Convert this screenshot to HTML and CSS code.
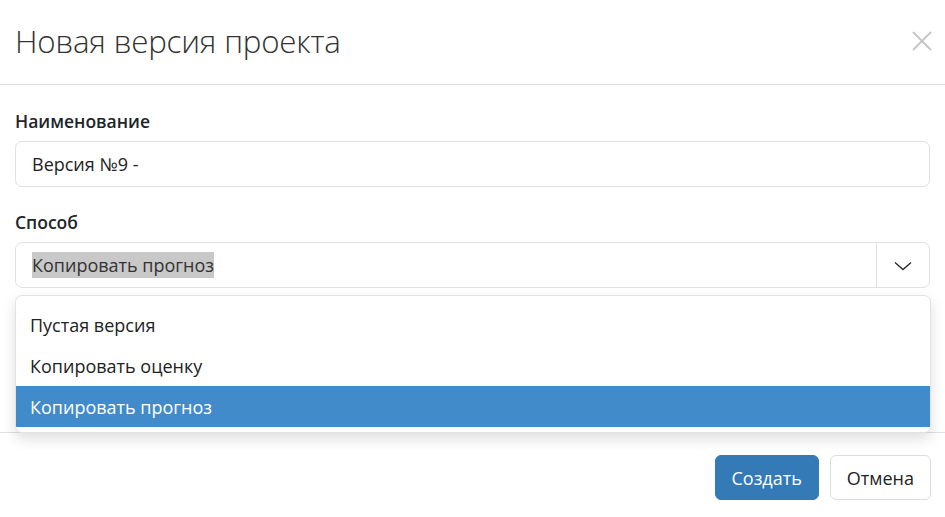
FILE: index.html
```html
<!DOCTYPE html>
<html lang="ru">
<head>
<meta charset="utf-8">
<title>Новая версия проекта</title>
<link rel="stylesheet" href="styles.css">
</head>
<body>
<div class="modal">
  <div class="modal-header">
    <h4 class="modal-title">Новая версия проекта</h4>
    <button class="close" aria-label="Закрыть">
      <svg width="20" height="20" viewBox="0 0 20 20"><path d="M1 1 L19 19 M19 1 L1 19" stroke="#c6c6c6" stroke-width="2" fill="none"/></svg>
    </button>
  </div>
  <div class="modal-body">
    <div class="form-group">
      <label class="form-label">Наименование</label>
      <div class="form-control">Версия №9 -</div>
    </div>
    <div class="form-group select-group">
      <label class="form-label">Способ</label>
      <div class="select">
        <div class="select-value"><span class="hl">Копировать прогноз</span></div>
        <div class="select-arrow">
          <svg width="18" height="10" viewBox="0 0 18 10"><path d="M1 1.5 L9 8.5 L17 1.5" stroke="#2b2b2b" stroke-width="1.4" fill="none"/></svg>
        </div>
      </div>
      <ul class="dropdown">
        <li class="item">Пустая версия</li>
        <li class="item">Копировать оценку</li>
        <li class="item active">Копировать прогноз</li>
      </ul>
    </div>
  </div>
  <div class="modal-footer">
    <button class="btn btn-primary">Создать</button>
    <button class="btn btn-default">Отмена</button>
  </div>
</div>
</body>
</html>
```
FILE: styles.css
```css
* { box-sizing: border-box; }
html, body { margin: 0; padding: 0; background: #fff; }
body {
  font-family: "Open Sans", "Noto Sans", sans-serif;
  color: #212529;
  width: 945px;
  height: 517px;
  overflow: hidden;
}
.modal { display: flex; flex-direction: column; }
.modal-header {
  height: 85px;
  border-bottom: 1px solid #dee2e6;
  display: flex;
  align-items: center;
  justify-content: space-between;
  padding: 0 13px 2px 15px;
}
.modal-title {
  margin: 0;
  font-weight: 300;
  font-size: 31.3px;
  color: #333;
  letter-spacing: -0.2px;
}
.close {
  border: 0;
  background: none;
  padding: 0;
  width: 20px;
  height: 20px;
}
.close svg { display: block; }
.modal-body {
  height: 347px;
  padding: 24px 15px 0 15px;
}
.form-group { margin-bottom: 23px; }
.form-label {
  display: block;
  font-weight: 600;
  font-size: 17.5px;
  line-height: 24px;
  margin-bottom: 8px;
  color: #212529;
}
.form-control {
  height: 46px;
  border: 1px solid #dfe1e5;
  border-radius: 7px;
  padding: 0 16px;
  display: flex;
  align-items: center;
  font-size: 18px;
  color: #222;
}
.select-group { position: relative; }
.select {
  height: 46px;
  border: 1px solid #dfe1e5;
  border-radius: 7px;
  display: flex;
}
.select-value {
  flex: 1;
  display: flex;
  align-items: center;
  padding-left: 16px;
  font-size: 18px;
  color: #333;
}
.hl { background: #c8c8c8; line-height: 26px; }
.select-arrow {
  width: 53px;
  border-left: 1px solid #dfe1e5;
  display: flex;
  align-items: center;
  justify-content: center;
  padding-top: 1px;
}
.select-arrow svg { display: block; }
.dropdown {
  position: absolute;
  left: 0;
  right: -1px;
  top: 85px;
  margin: 0;
  padding: 8px 0 5px;
  list-style: none;
  background: #fff;
  border: 1px solid #e3e3e3;
  border-radius: 7px;
  box-shadow: 0 6px 14px rgba(0,0,0,0.13);
  z-index: 5;
  overflow: hidden;
}
.item {
  height: 41px;
  display: flex;
  align-items: center;
  padding-left: 14px;
  font-size: 18px;
  color: #222;
}
.item.active { background: #428bca; color: #fff; }
.modal-footer {
  border-top: 1px solid #dee2e6;
  display: flex;
  justify-content: flex-end;
  gap: 11px;
  padding: 22px 14px 0 15px;
}
.btn {
  height: 45px;
  border-radius: 6px;
  font-family: inherit;
  font-size: 18px;
  padding: 0 16px;
  cursor: pointer;
}
.btn-primary {
  background: #337ab7;
  border: 1px solid #337ab7;
  color: #fff;
}
.btn-default {
  background: #fff;
  border: 1px solid #dcdcdc;
  color: #222;
}
```
